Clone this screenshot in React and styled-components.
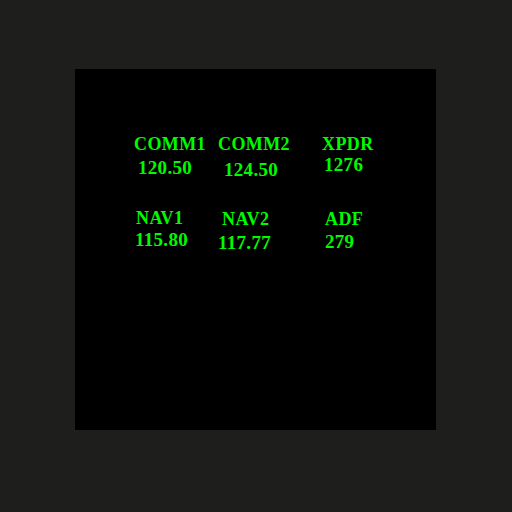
import React from 'react'
import styled, { createGlobalStyle } from 'styled-components'

const GlobalStyle = createGlobalStyle`
  html, body {
    margin: 0;
    padding: 0;
    background: #1e1f1c;
  }
`

const Page = styled.div`
  width: 512px;
  height: 512px;
  display: flex;
  align-items: flex-start;
  padding: 69px 0 0 75px;
  box-sizing: border-box;
`

const Panel = styled.div`
  width: 361px;
  height: 361px;
  background: #000;
  box-sizing: border-box;
  padding: 65px 0 0 59px;
`

const Grid = styled.div`
  display: grid;
  grid-template-columns: 84px 104px auto;
  grid-auto-rows: 74px;
  align-items: start;
`

const Readout = styled.div`
  display: flex;
  flex-direction: column;
  align-items: flex-start;
  font-family: "Liberation Serif", "Times New Roman", serif;
  font-weight: bold;
  line-height: 20px;
  color: #00fa00;
`

const Label = styled.span`
  font-size: 18px;
  letter-spacing: 0.4px;
  margin-left: ${p => p.dx || 0}px;
  margin-top: ${p => p.dy || 0}px;
`

const Value = styled.span`
  font-size: 19px;
  letter-spacing: 0.3px;
  margin-left: ${p => p.dx || 0}px;
  margin-top: ${p => p.gap || 0}px;
`

const radios = [
  { name: 'COMM1', value: '120.50', lx: 0, ly: 0, vx: 4, vg: 4 },
  { name: 'COMM2', value: '124.50', lx: 0, ly: 0, vx: 6, vg: 6 },
  { name: 'XPDR', value: '1276', lx: 0, ly: 0, vx: 2, vg: 1 },
  { name: 'NAV1', value: '115.80', lx: 2, ly: 0, vx: 1, vg: 2 },
  { name: 'NAV2', value: '117.77', lx: 4, ly: 1, vx: 0, vg: 4 },
  { name: 'ADF', value: '279', lx: 3, ly: 1, vx: 3, vg: 3 },
]

const App = () => {
  return (
    <Page>
      <GlobalStyle />
      <Panel>
        <Grid>
          {radios.map(r => (
            <Readout key={r.name}>
              <Label dx={r.lx} dy={r.ly}>{r.name}</Label>
              <Value dx={r.vx} gap={r.vg}>{r.value}</Value>
            </Readout>
          ))}
        </Grid>
      </Panel>
    </Page>
  )
}

export default App
